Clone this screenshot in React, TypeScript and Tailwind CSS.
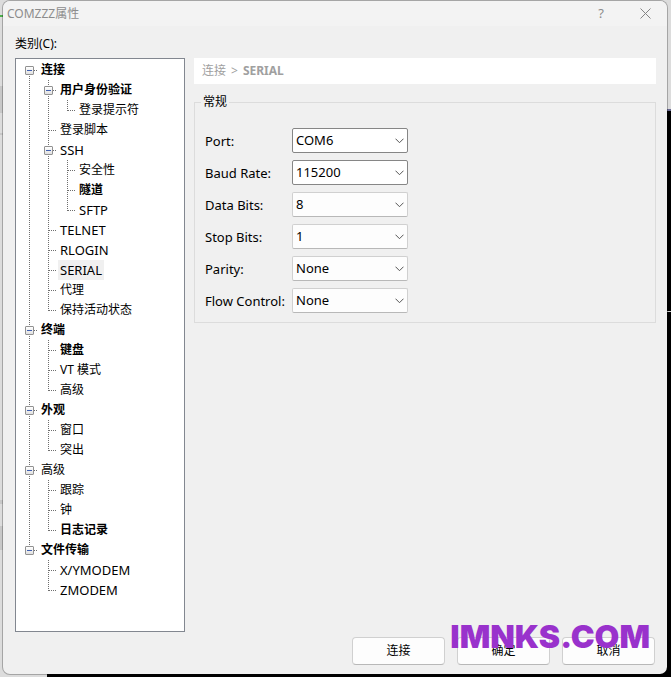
import { useState } from 'react';

type TreeNode = {
  label: string;
  bold?: boolean;
  children?: TreeNode[];
};

const tree: TreeNode[] = [
  {
    label: '连接',
    bold: true,
    children: [
      { label: '用户身份验证', bold: true, children: [{ label: '登录提示符' }] },
      { label: '登录脚本' },
      {
        label: 'SSH',
        children: [{ label: '安全性' }, { label: '隧道', bold: true }, { label: 'SFTP' }],
      },
      { label: 'TELNET' },
      { label: 'RLOGIN' },
      { label: 'SERIAL' },
      { label: '代理' },
      { label: '保持活动状态' },
    ],
  },
  {
    label: '终端',
    bold: true,
    children: [{ label: '键盘', bold: true }, { label: 'VT 模式' }, { label: '高级' }],
  },
  { label: '外观', bold: true, children: [{ label: '窗口' }, { label: '突出' }] },
  {
    label: '高级',
    children: [{ label: '跟踪' }, { label: '钟' }, { label: '日志记录', bold: true }],
  },
  { label: '文件传输', bold: true, children: [{ label: 'X/YMODEM' }, { label: 'ZMODEM' }] },
];

type Field = { id: string; label: string; options: string[]; editable?: boolean };

const fields: Field[] = [
  { id: 'port', label: 'Port:', options: ['COM6'], editable: true },
  { id: 'baud', label: 'Baud Rate:', options: ['115200', '9600'], editable: true },
  { id: 'data', label: 'Data Bits:', options: ['8', '7'] },
  { id: 'stop', label: 'Stop Bits:', options: ['1', '2'] },
  { id: 'parity', label: 'Parity:', options: ['None', 'Odd', 'Even'] },
  { id: 'flow', label: 'Flow Control:', options: ['None', 'XON/XOFF'] },
];

/** Latin-only labels are set one step larger than the Chinese ones. */
const isLatin = (text: string) => /^[A-Z/]+$/.test(text);

/** One 19x20 cell of dotted guide lines in front of a tree label. */
function Guide({ top, bottom, branch }: { top: boolean; bottom: boolean; branch: boolean }) {
  return (
    <svg
      width="19"
      height="20"
      className="shrink-0"
      stroke="#6e6e6e"
      strokeDasharray="1 1"
      shapeRendering="crispEdges"
      aria-hidden="true"
    >
      {top && <path d="M9.5 0V11" />}
      {bottom && <path d="M9.5 10V20" />}
      {branch && <path d="M10 10.5H18" />}
    </svg>
  );
}

type BranchProps = {
  nodes: TreeNode[];
  trail: boolean[];
  selected: string;
  onSelect: (label: string) => void;
};

function Branch({ nodes, trail, selected, onSelect }: BranchProps) {
  return (
    <ul>
      {nodes.map((node, i) => {
        const last = i === nodes.length - 1;
        const first = trail.length === 0 && i === 0;
        return (
          <li key={node.label}>
            <div className="flex h-5">
              {trail.map((line, n) => (
                <Guide key={n} top={line} bottom={line} branch={false} />
              ))}
              <div className="relative flex">
                <Guide top={!first} bottom={!last} branch />
                {node.children && (
                  <button
                    type="button"
                    aria-label={node.label}
                    className="absolute top-1.5 left-[5px] flex size-[9px] items-center justify-center rounded-[1px] border border-[#919191] bg-linear-to-b from-white to-[#e0e0e0]"
                  >
                    <span className="h-px w-[5px] bg-[#3f5fb0]" />
                  </button>
                )}
              </div>
              <button
                type="button"
                onClick={() => onSelect(node.label)}
                className={`px-0.5 leading-5 whitespace-nowrap ${node.bold ? 'font-bold' : ''} ${
                  isLatin(node.label) ? 'text-[13px]' : 'text-xs'
                } ${selected === node.label ? 'bg-[#f0f0f0]' : ''}`}
              >
                {node.label}
              </button>
            </div>
            {node.children && (
              <Branch
                nodes={node.children}
                trail={[...trail, !last]}
                selected={selected}
                onSelect={onSelect}
              />
            )}
          </li>
        );
      })}
    </ul>
  );
}

function SelectField({ field }: { field: Field }) {
  return (
    <div className="flex h-[25px] items-center">
      <label htmlFor={field.id} className="w-[87px] shrink-0 pt-0.5 text-[13px] whitespace-nowrap">
        {field.label}
      </label>
      <div className="relative h-full w-[116px]">
        <select
          id={field.id}
          className={`h-full w-full appearance-none rounded-[2px] border pr-5 pb-0.5 pl-[3px] text-[13px] leading-5 ${
            field.editable
              ? 'border-[#868686] bg-white'
              : 'border-[#d0d0d0] border-b-[#b8b8b8] bg-[#fdfdfd]'
          }`}
        >
          {field.options.map((o) => (
            <option key={o}>{o}</option>
          ))}
        </select>
        <svg
          width="9"
          height="6"
          viewBox="0 0 9 6"
          className="pointer-events-none absolute top-2.5 right-1"
          fill="none"
          stroke="#555555"
          aria-hidden="true"
        >
          <path d="M0.5 0.7L4.5 4.7L8.5 0.7" />
        </svg>
      </div>
    </div>
  );
}

export default function App() {
  const [selected, setSelected] = useState('SERIAL');

  return (
    <div className="relative flex min-h-screen flex-col bg-[#dcdcdc] pr-[3px] pb-0.5 pl-0.5 font-['Noto_Sans','Noto_Sans_CJK_SC',sans-serif] text-xs text-black">
      <div className="absolute top-[109px] right-0 bottom-0 w-4 border-t-2 border-[#6c6c94] bg-black" />
      <div className="absolute right-0 bottom-0 left-[47px] h-4 bg-black" />
      <div className="absolute top-[311px] right-0 h-px w-1 bg-[#d0d0d0]" />
      <div className="absolute top-[86px] left-0 h-[27px] w-1 bg-[#c8c8c8]" />
      <div className="absolute top-[133px] left-0 h-0.5 w-1 bg-[#c8c8c8]" />
      <div className="absolute top-[500px] left-0 h-1 w-1 bg-[#c8c8c8]" />
      <div className="absolute top-[526px] left-0 h-6 w-1 bg-[#c8c8c8]" />
      <div className="absolute top-[15px] left-0 h-0.5 w-1 bg-[#4cb04c]" />

      <main className="relative flex flex-1 flex-col overflow-hidden rounded-lg border border-black/25 bg-[#f0f0f0] bg-clip-padding">
        <header className="flex h-[25px] items-center bg-[#f3f3f3] pr-4 pl-1 text-[#8c8c8c]">
          <h1 className="flex-1">COMZZZ属性</h1>
          <button type="button" aria-label="帮助" className="mr-9 text-[13px]">
            ?
          </button>
          <button type="button" aria-label="关闭">
            <svg width="11" height="11" viewBox="0 0 11 11" stroke="#858585" aria-hidden="true">
              <path d="M0.5 0.5L10.5 10.5M10.5 0.5L0.5 10.5" />
            </svg>
          </button>
        </header>

        <div className="flex flex-1 flex-col pt-2 pr-[11px] pb-[9px] pl-3">
          <h2 className="mb-1 h-5 leading-5">类别(C):</h2>
          <div className="flex flex-1 gap-[9px]">
            <nav className="w-[170px] shrink-0 border border-[#828790] bg-white pt-px pl-1">
              <Branch nodes={tree} trail={[]} selected={selected} onSelect={setSelected} />
            </nav>
            <section className="min-w-0 flex-1">
              <p className="flex h-[26px] gap-[5px] bg-white pl-2 leading-[26px] text-[#a0a0a0]">
                <span>连接</span>
                <span>&gt;</span>
                <b>SERIAL</b>
              </p>
              <fieldset className="mt-2 flex flex-col gap-[7px] border border-[#dcdcdc] px-2.5 pt-4 pb-[9px]">
                <legend className="-ml-1 px-0.5 leading-5">常规</legend>
                {fields.map((f) => (
                  <SelectField key={f.id} field={f} />
                ))}
              </fieldset>
            </section>
          </div>
          <footer className="relative mt-[5px] flex justify-end gap-3 pr-px">
            {['连接', '确定', '取消'].map((t) => (
              <button
                key={t}
                type="button"
                className="h-7 w-[93px] rounded border border-[#d0d0d0] border-b-[#b8b8b8] bg-[#fdfdfd]"
              >
                {t}
              </button>
            ))}
            <span className="pointer-events-none absolute right-1.5 bottom-3 font-['Inter',sans-serif] text-[32px] leading-8 font-black text-[#9932cc]">
              IMNKS.COM
            </span>
          </footer>
        </div>
      </main>
    </div>
  );
}
